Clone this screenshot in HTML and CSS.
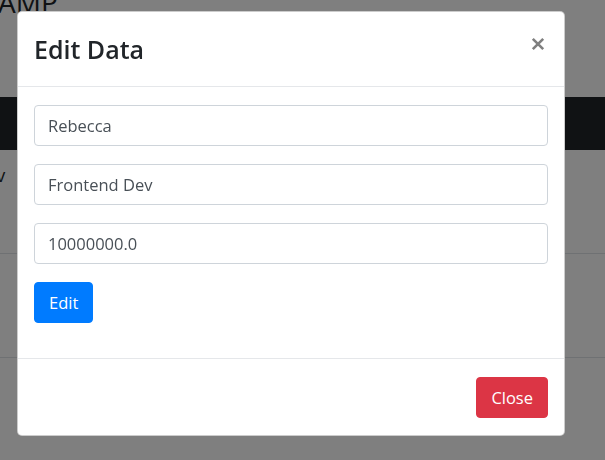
FILE: index.html
```html
<!DOCTYPE html>
<html lang="en">
<head>
<meta charset="utf-8">
<title>Edit Data</title>
<link rel="stylesheet" href="styles.css">
</head>
<body>
  <div class="page">
    <h1 class="brand">AMP</h1>
    <div class="navbar"></div>
    <div class="table">
      <div class="row"><span class="cell">Dev</span></div>
      <div class="row"></div>
    </div>
  </div>

  <div class="backdrop"></div>

  <div class="modal">
    <div class="modal-header">
      <h4 class="modal-title">Edit Data</h4>
      <button class="close" type="button" aria-label="Close">
        <svg width="14" height="14" viewBox="0 0 14 14"><path d="M1.8 1.8 L12.2 12.2 M12.2 1.8 L1.8 12.2" stroke="#7f7f7f" stroke-width="2.6" fill="none"/></svg>
      </button>
    </div>
    <div class="modal-body">
      <form class="form">
        <input class="form-control" type="text" value="Rebecca">
        <input class="form-control" type="text" value="Frontend Dev">
        <input class="form-control" type="text" value="10000000.0">
        <button class="btn btn-primary" type="button">Edit</button>
      </form>
    </div>
    <div class="modal-footer">
      <button class="btn btn-danger" type="button">Close</button>
    </div>
  </div>
</body>
</html>
```
FILE: styles.css
```css
html, body {
  margin: 0;
  padding: 0;
}
body {
  font-family: "Open Sans", "Noto Sans", sans-serif;
  color: #212529;
  background: #fff;
  overflow: hidden;
  height: 460px;
}

.page {
  display: flex;
  flex-direction: column;
}
.brand {
  margin: -13px 0 0 -2px;
  font-size: 28px;
  line-height: 30px;
  font-weight: 500;
  height: 30px;
}
.navbar {
  margin-top: 80px;
  height: 53px;
  background: #212529;
}
.row {
  height: 103px;
  border-bottom: 1px solid #dee2e6;
}
.cell {
  display: block;
  padding-top: 12px;
  margin-left: -27px;
  font-size: 18px;
  line-height: 27px;
}

.backdrop {
  position: fixed;
  inset: 0;
  background: rgba(0, 0, 0, 0.5);
}

.modal {
  position: fixed;
  top: 11px;
  left: 17px;
  width: 548px;
  box-sizing: border-box;
  background: #fff;
  border: 1px solid rgba(0, 0, 0, 0.2);
  border-radius: 5px;
  display: flex;
  flex-direction: column;
}
.modal-header {
  display: flex;
  justify-content: space-between;
  align-items: flex-start;
  padding: 18px 16px;
  border-bottom: 1px solid #e5e7ea;
}
.modal-title {
  margin: 0;
  font-size: 25px;
  line-height: 38px;
  font-weight: 600;
  color: #212529;
}
.close {
  margin: 7px 3px 0 0;
  padding: 0;
  border: 0;
  background: none;
  display: flex;
}
.modal-body {
  padding: 18px 16px 35px;
}
.form {
  display: flex;
  flex-direction: column;
  align-items: flex-start;
  gap: 18px;
  margin: 0;
}
.form-control {
  width: 100%;
  height: 41px;
  box-sizing: border-box;
  margin: 0;
  padding: 0 13px;
  border: 1px solid #ced4da;
  border-radius: 4px;
  font-family: inherit;
  font-size: 16.5px;
  color: #495057;
  background: #fff;
}
.btn {
  height: 41px;
  margin: 0;
  padding: 0 14px;
  border-radius: 4px;
  font-family: inherit;
  font-size: 16.5px;
  color: #fff;
  line-height: 39px;
}
.btn-primary {
  background: #007bff;
  border: 1px solid #007bff;
}
.btn-danger {
  background: #dc3545;
  border: 1px solid #dc3545;
}
.modal-footer {
  display: flex;
  justify-content: flex-end;
  padding: 18px 16px 17px;
  border-top: 1px solid #e5e7ea;
}
```
